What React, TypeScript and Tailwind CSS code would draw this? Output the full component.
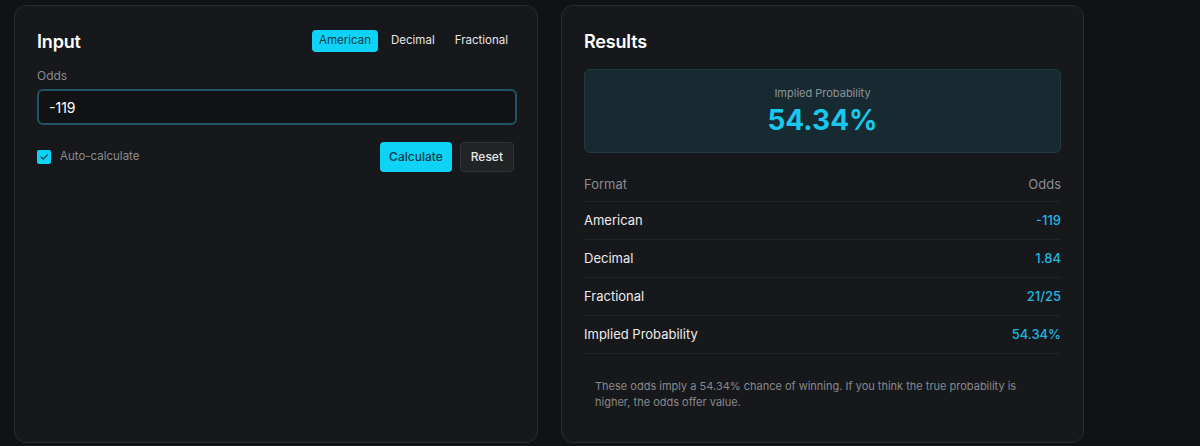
import { useState } from "react";

const rows = [
  { label: "American", value: "-119" },
  { label: "Decimal", value: "1.84" },
  { label: "Fractional", value: "21/25" },
  { label: "Implied Probability", value: "54.34%" },
];

export default function App() {
  const [format, setFormat] = useState("American");
  const [odds, setOdds] = useState("-119");
  const [auto, setAuto] = useState(true);

  return (
    <div
      className="min-h-screen bg-[#111214] text-white pl-[14px] pt-[5px] flex gap-[23px]"
      style={{ fontFamily: "Inter, 'Noto Sans', sans-serif" }}
    >
      {/* input card */}
      <div className="w-[524px] h-[438px] rounded-xl border border-[#2a2b2f] bg-[#17181b] px-[22px] pt-[21px]">
        <div className="flex items-center justify-between h-[28px]">
          <h2 className="text-[18px] font-semibold tracking-[-0.01em]">Input</h2>
          <div className="flex items-center gap-[6px]">
            {["American", "Decimal", "Fractional"].map((f) => (
              <button
                key={f}
                onClick={() => setFormat(f)}
                className={
                  format === f
                    ? "h-[22px] px-[7px] rounded-[4px] bg-[#0fd2f7] text-[#0b3a47] text-[11.5px]"
                    : "h-[22px] px-[7px] rounded-[4px] text-[#e6e6e6] text-[11.5px]"
                }
              >
                {f}
              </button>
            ))}
          </div>
        </div>

        <div className="mt-[13px] text-[12px] leading-4 text-[#8a8b8f]">Odds</div>
        <input
          value={odds}
          onChange={(e) => setOdds(e.target.value)}
          className="mt-[5px] w-[480px] h-[36px] rounded-md border-2 border-[#1f5562] bg-[#111214] px-[10px] text-[14px] text-white outline-none"
        />

        <div className="mt-[17px] flex items-center justify-between pr-[1px]">
          <label className="flex items-center gap-[9px] cursor-pointer">
            <button
              onClick={() => setAuto(!auto)}
              className="w-[14px] h-[14px] rounded-[2px] bg-[#0fd2f7] flex items-center justify-center"
            >
              {auto && (
                <svg width="10" height="10" viewBox="0 0 24 24" fill="none" stroke="#0b3a47" strokeWidth="3" strokeLinecap="round" strokeLinejoin="round">
                  <path d="M5 12l5 5L20 7" />
                </svg>
              )}
            </button>
            <span className="text-[11.5px] text-[#8a8b8f]">Auto-calculate</span>
          </label>
          <div className="flex gap-[8px]">
            <button className="h-[30px] px-[9px] rounded-[4px] bg-[#0fd2f7] text-[#0b3a47] text-[12px] font-medium">
              Calculate
            </button>
            <button className="h-[30px] px-[10px] rounded-[4px] bg-[#222325] border border-[#313236] text-[#e6e6e6] text-[12px] font-medium">
              Reset
            </button>
          </div>
        </div>
      </div>

      {/* results card */}
      <div className="w-[523px] h-[438px] rounded-xl border border-[#2a2b2f] bg-[#17181b] px-[22px] pt-[21px]">
        <div className="h-[28px] flex items-center">
          <h2 className="text-[18px] font-semibold tracking-[-0.01em]">Results</h2>
        </div>

        <div className="mt-[14px] h-[84px] rounded-md border border-[#1e3b44] bg-[#172a31] flex flex-col items-center pt-[15px]">
          <div className="text-[11px] leading-4 text-[#8c9397]">Implied Probability</div>
          <div className="text-[28px] leading-[36px] font-bold text-[#18c8ee] mt-[1px]">54.34%</div>
        </div>

        <div className="mt-[15px]">
          <div className="h-[34px] flex items-center justify-between border-b border-[#222327] text-[13px] text-[#8a8b8f]">
            <span>Format</span>
            <span>Odds</span>
          </div>
          {rows.map((r) => (
            <div
              key={r.label}
              className="h-[38px] flex items-center justify-between border-b border-[#222327] text-[13px]"
            >
              <span className="text-[#ececec]">{r.label}</span>
              <span className="text-[#1fb6e0] font-medium">{r.value}</span>
            </div>
          ))}
        </div>

        <p className="mt-[24px] px-[11px] text-[11px] leading-4 text-[#86888c]">
          These odds imply a 54.34% chance of winning. If you think the true probability is higher, the odds offer value.
        </p>
      </div>
    </div>
  );
}
